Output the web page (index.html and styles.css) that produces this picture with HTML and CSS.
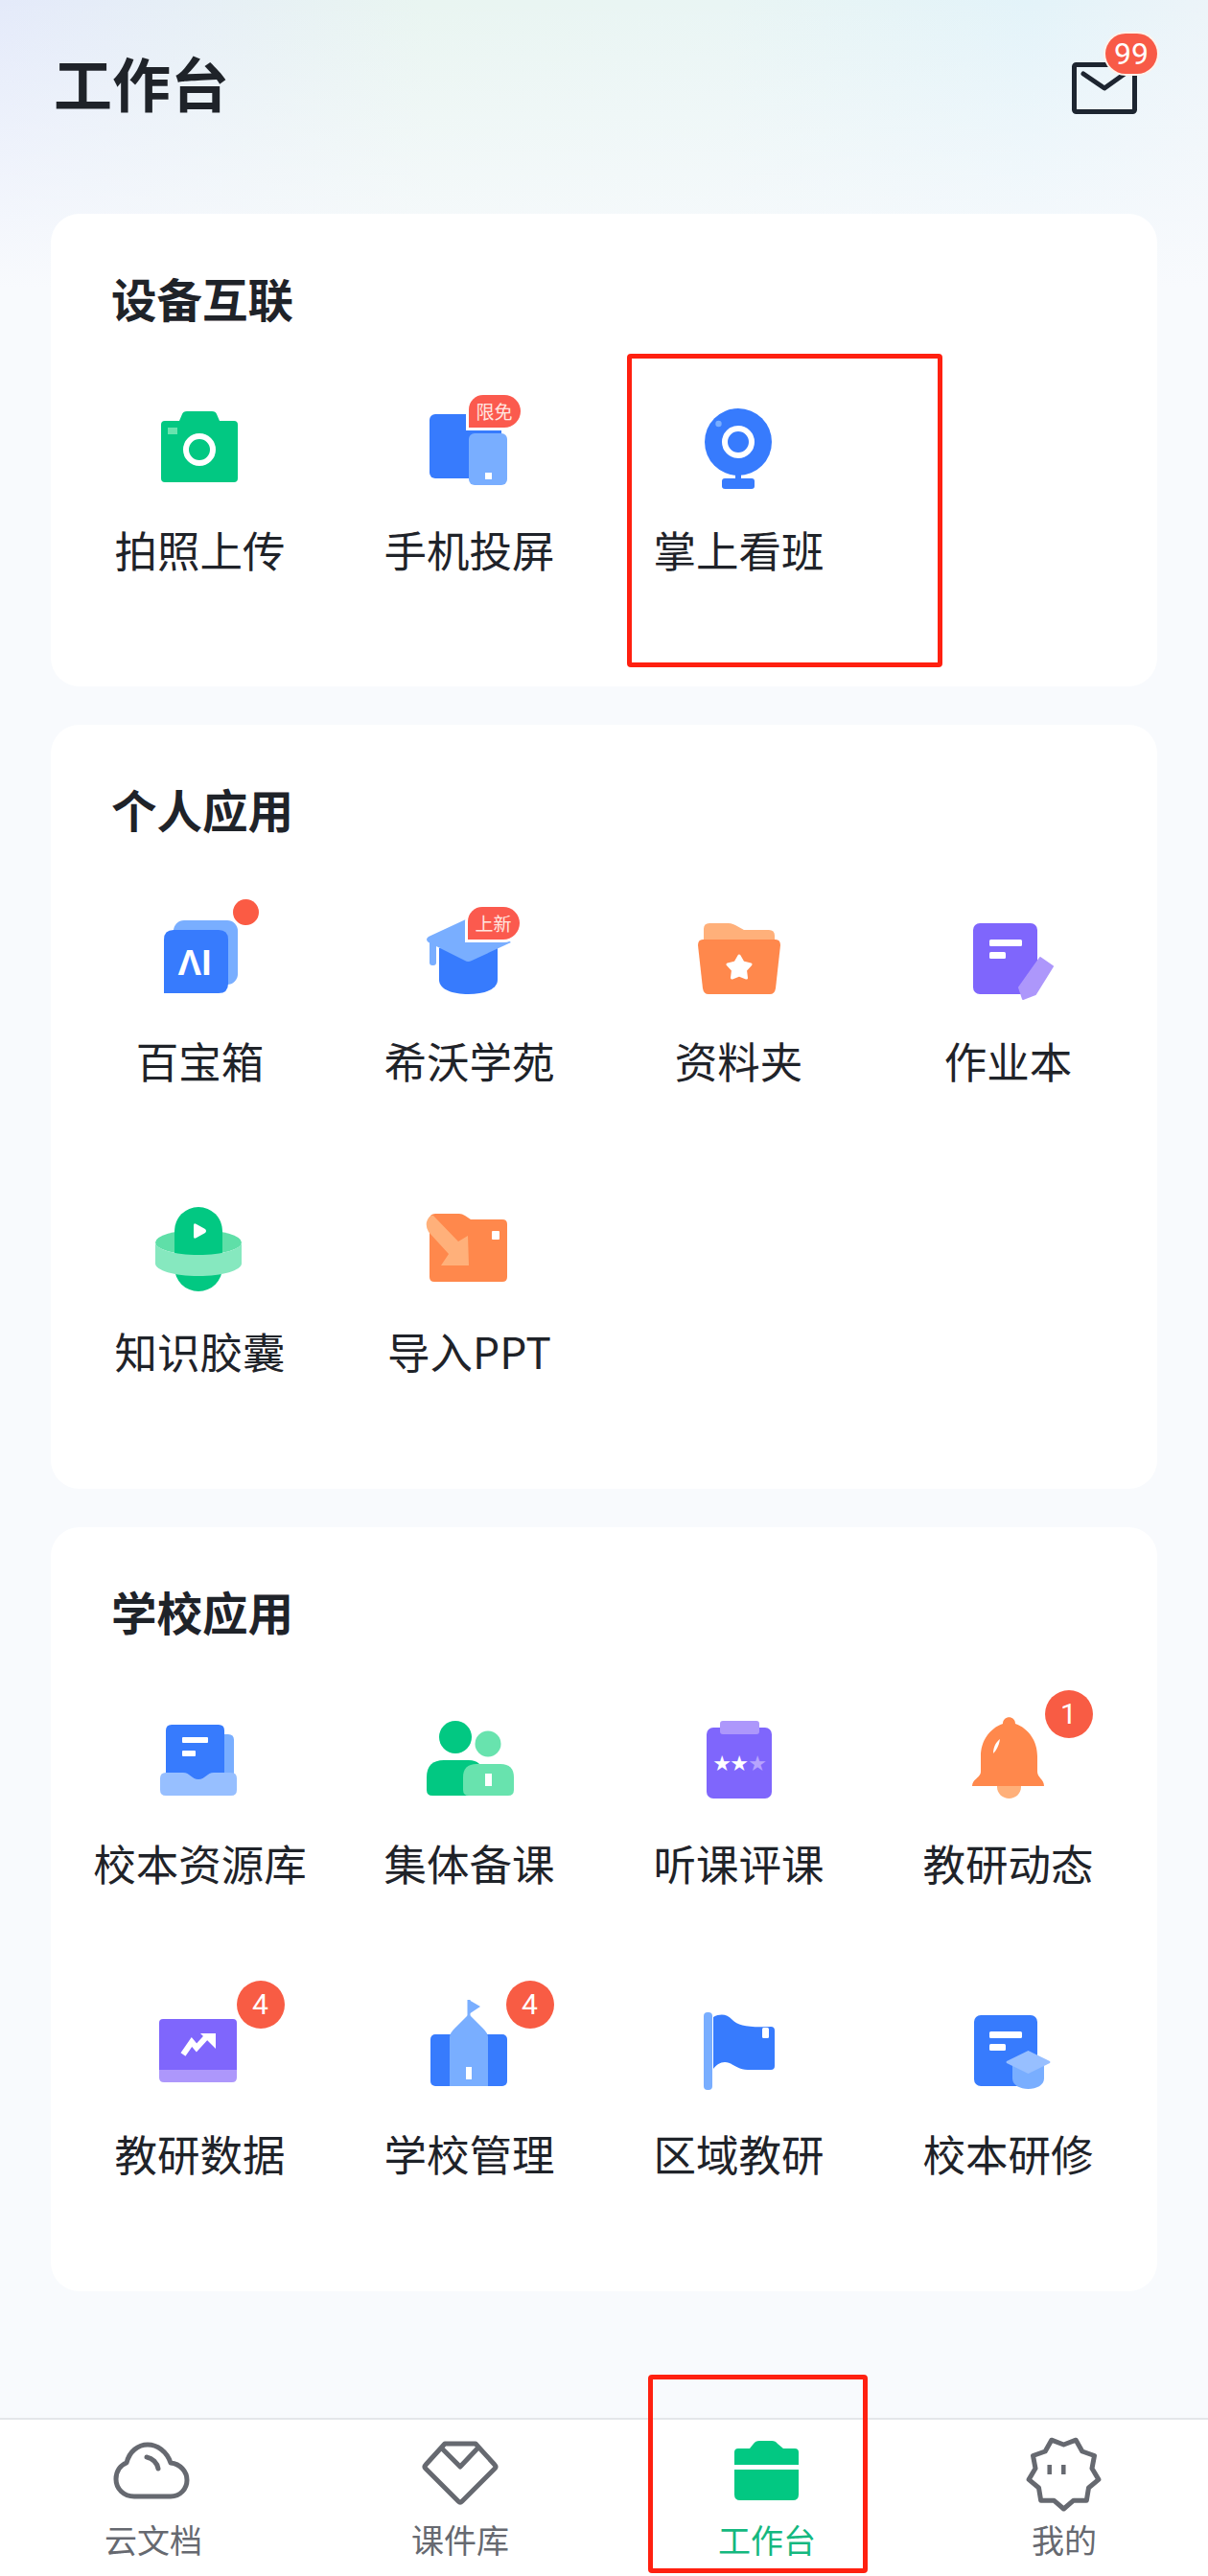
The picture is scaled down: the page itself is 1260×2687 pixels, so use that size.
FILE: index.html
```html
<!DOCTYPE html>
<html lang="zh-CN">
<head>
    <meta charset="UTF-8">
    <meta name="viewport" content="width=device-width, initial-scale=1.0">
    <title>工作台</title>
    <link rel="stylesheet" href="styles.css">
</head>
<body>
    <div class="page">
        <div class="main">
            <div class="header">
                <h1>工作台</h1>
                <div class="mail">
                    <svg width="68" height="54" viewBox="0 0 68 54">
                        <rect x="2.5" y="2.5" width="63" height="49" rx="2" fill="none" stroke="#1d2530" stroke-width="5"/>
                        <path d="M12 12 L34 27 L55 12" fill="none" stroke="#1d2530" stroke-width="5" stroke-linecap="round" stroke-linejoin="round"/>
                    </svg>
                    <span class="mail-count">99</span>
                </div>
            </div>

            <!-- 设备互联 -->
            <section class="card">
                <h2>设备互联</h2>
                <div class="apps">
                    <div class="item">
                        <div class="icon">
                            <svg class="ic" viewBox="0 0 100 100">
                                <path d="M14 23 H29 L32 16 Q33 13 37 13 H63 Q67 13 68 16 L71 23 H86 Q90 23 90 27 V83 Q90 87 86 87 H14 Q10 87 10 83 V27 Q10 23 14 23Z" fill="#02c882"/>
                                <rect x="17" y="30" width="10" height="7" fill="#68e3ae"/>
                                <circle cx="50" cy="53" r="14" fill="none" stroke="#fff" stroke-width="6"/>
                            </svg>
                        </div>
                        <div class="label">拍照上传</div>
                    </div>
                    <div class="item">
                        <div class="icon">
                            <svg class="ic" viewBox="0 0 100 100">
                                <rect x="9" y="16" width="75" height="67" rx="6" fill="#377bfd"/>
                                <rect x="50" y="36" width="40" height="54" rx="6" fill="#79aeff"/>
                                <rect x="67" y="77" width="7" height="7" fill="#fff"/>
                            </svg>
                            <span class="tag">限免</span>
                        </div>
                        <div class="label">手机投屏</div>
                    </div>
                    <div class="item">
                        <div class="icon">
                            <svg class="ic" viewBox="0 0 100 100">
                                <circle cx="50" cy="45" r="35" fill="#377bfd"/>
                                <rect x="47" y="76" width="6" height="10" fill="#377bfd"/>
                                <rect x="33" y="83" width="34" height="11" rx="3" fill="#377bfd"/>
                                <circle cx="50" cy="45" r="14" fill="none" stroke="#fff" stroke-width="6"/>
                                <circle cx="29.5" cy="26" r="3.2" fill="#79aeff"/>
                            </svg>
                        </div>
                        <div class="label">掌上看班</div>
                    </div>
                </div>
            </section>

            <!-- 个人应用 -->
            <section class="card">
                <h2>个人应用</h2>
                <div class="apps">
                    <div class="item">
                        <div class="icon">
                            <svg class="ic" viewBox="0 0 100 100">
                                <rect x="23" y="11" width="67" height="67" rx="11" fill="#79aeff"/>
                                <path d="M23 21 H70 Q80 21 80 31 V77 Q80 87 70 87 H13 V31 Q13 21 23 21Z" fill="#377bfd"/>
                                <text x="45" y="68" class="ai-text">ΛI</text>
                            </svg>
                            <span class="dot"></span>
                        </div>
                        <div class="label">百宝箱</div>
                    </div>
                    <div class="item">
                        <div class="icon">
                            <svg class="ic" viewBox="0 0 100 100">
                                <path d="M19 40 H80 V73 C80 83 66 88 49.5 88 C33 88 19 83 19 73Z" fill="#377bfd"/>
                                <rect x="9" y="32" width="7" height="26" rx="3" fill="#79aeff"/>
                                <path d="M49 9 L8 28 Q4 31 8 34 L46 53 Q49 55 53 53 L94 34 L60 9Z" fill="#79aeff"/>
                            </svg>
                            <span class="tag tag-new">上新</span>
                        </div>
                        <div class="label">希沃学苑</div>
                    </div>
                    <div class="item">
                        <div class="icon">
                            <svg class="ic" viewBox="0 0 100 100">
                                <path d="M14 40 V20 Q14 14 20 14 H40 Q44 14 47 16 L56 21 H82 Q88 21 88 27 V40Z" fill="#ffb07a"/>
                                <path d="M13 31 H89 Q94 31 94 37 L89 82 Q88 88 83 88 H19 Q14 88 13 82 L8 37 Q8 31 13 31Z" fill="#ff884c"/>
                                <path d="M51 48 L55 55 L63 57 L57.5 63 L58.5 71 L51 68 L43.5 71 L44.5 63 L39 57 L47 55Z" fill="#fff" stroke="#fff" stroke-width="3" stroke-linejoin="round"/>
                            </svg>
                        </div>
                        <div class="label">资料夹</div>
                    </div>
                    <div class="item">
                        <div class="icon">
                            <svg class="ic" viewBox="0 0 100 100">
                                <rect x="14" y="14" width="67" height="74" rx="7" fill="#7f66fc"/>
                                <rect x="31" y="31" width="34" height="7" rx="1.5" fill="#fff"/>
                                <rect x="31" y="44" width="17" height="7" rx="1.5" fill="#fff"/>
                                <path d="M84 50 L97 59 L79 88 L66 93 L62 81Z" fill="#ad97fb" stroke="#ad97fb" stroke-width="2" stroke-linejoin="round"/>
                            </svg>
                        </div>
                        <div class="label">作业本</div>
                    </div>
                    <div class="item">
                        <div class="icon">
                            <svg class="ic" viewBox="0 0 100 100">
                                <ellipse cx="49" cy="44" rx="45" ry="13" fill="#5fdfa8"/>
                                <rect x="24" y="7" width="50" height="88" rx="25" fill="#02c882"/>
                                <path d="M44 26 Q44 23 47 25 L56 30 Q58 32 56 34 L47 39 Q44 41 44 38Z" fill="#fff"/>
                                <path d="M4 44 C4 51 24 57 49 57 C74 57 94 51 94 44 V66 C94 73 74 79 49 79 C24 79 4 73 4 66Z" fill="#86e8bf"/>
                            </svg>
                        </div>
                        <div class="label">知识胶囊</div>
                    </div>
                    <div class="item">
                        <div class="icon">
                            <svg class="ic" viewBox="0 0 100 100">
                                <path d="M15 14 H40 Q43 14 46 16 L52 20 H85 Q90 20 90 25 V80 Q90 85 85 85 H14 Q9 85 9 80 V20 Q9 14 15 14Z" fill="#ff884c"/>
                                <path d="M13 16 L39 43 L49 37 L50 68 L21 68 L29 56 L8 33 Q4 26 7 20 Q10 15 13 16Z" fill="#ffb07a"/>
                                <rect x="74" y="32" width="8" height="9" rx="1" fill="#fff"/>
                            </svg>
                        </div>
                        <div class="label">导入PPT</div>
                    </div>
                </div>
            </section>

            <!-- 学校应用 -->
            <section class="card">
                <h2>学校应用</h2>
                <div class="apps">
                    <div class="item">
                        <div class="icon">
                            <svg class="ic" viewBox="0 0 100 100">
                                <path d="M70 23 H80 Q86 23 86 29 V70 H70Z" fill="#79aeff"/>
                                <path d="M21 13 H70 Q76 13 76 19 V72 H15 V19 Q15 13 21 13Z" fill="#377bfd"/>
                                <rect x="32" y="26" width="27" height="6" rx="1" fill="#fff"/>
                                <rect x="32" y="40" width="14" height="6" rx="1" fill="#fff"/>
                                <path d="M15 63 H33 C40 63 42 70 49 70 C56 70 58 63 65 63 H83 Q89 63 89 69 V81 Q89 87 83 87 H15 Q9 87 9 81 V69 Q9 63 15 63Z" fill="#97bfff"/>
                            </svg>
                        </div>
                        <div class="label">校本资源库</div>
                    </div>
                    <div class="item">
                        <div class="icon">
                            <svg class="ic" viewBox="0 0 100 100">
                                <circle cx="36" cy="26" r="17" fill="#02c882"/>
                                <circle cx="70" cy="33" r="13.5" fill="#68e3ae"/>
                                <path d="M24 50 H50 Q64 50 64 64 V87 H12 Q6 87 6 81 V68 Q6 50 24 50Z" fill="#02c882"/>
                                <path d="M58 54 H83 Q97 54 97 68 V81 Q97 87 91 87 H50 Q44 87 44 81 V68 Q44 54 58 54Z" fill="#68e3ae"/>
                                <rect x="67" y="64" width="7" height="13" fill="#fff"/>
                            </svg>
                        </div>
                        <div class="label">集体备课</div>
                    </div>
                    <div class="item">
                        <div class="icon">
                            <svg class="ic" viewBox="0 0 100 100">
                                <rect x="17" y="16" width="68" height="74" rx="7" fill="#7f66fc"/>
                                <rect x="31" y="9" width="41" height="14" rx="3" fill="#ad97fb"/>
                                <text x="33" y="61" class="star">★</text>
                                <text x="51" y="61" class="star">★</text>
                                <text x="70" y="61" class="star star-dim">★</text>
                            </svg>
                        </div>
                        <div class="label">听课评课</div>
                    </div>
                    <div class="item">
                        <div class="icon">
                            <svg class="ic" viewBox="0 0 100 100">
                                <path d="M39 76 H64 V78 C64 85 58 90 51.5 90 C45 90 39 85 39 78Z" fill="#ffb07a"/>
                                <path d="M45 12 C45 3 58 3 58 12 C72 17 81 30 81 46 V62 C81 68 88 70 88 77 H13 C13 70 22 68 22 62 V46 C22 30 31 17 45 12Z" fill="#ff884c"/>
                                <path d="M42 28 C38 31 35 36 35 43 C38 40 41 35 42 28Z" fill="#fff"/>
                            </svg>
                            <span class="count">1</span>
                        </div>
                        <div class="label">教研动态</div>
                    </div>
                    <div class="item">
                        <div class="icon">
                            <svg class="ic" viewBox="0 0 100 100">
                                <path d="M8 70 H89 V78 Q89 83 84 83 H13 Q8 83 8 78Z" fill="#ad97fb"/>
                                <path d="M12 17 H85 Q89 17 89 21 V70 H8 V21 Q8 17 12 17Z" fill="#7f66fc"/>
                                <path d="M33 54 L42 41 L47 47 L57 36" fill="none" stroke="#fff" stroke-width="6" stroke-linejoin="miter"/>
                                <path d="M51 32 H67 V48Z" fill="#fff"/>
                            </svg>
                            <span class="count">4</span>
                        </div>
                        <div class="label">教研数据</div>
                    </div>
                    <div class="item">
                        <div class="icon">
                            <svg class="ic" viewBox="0 0 100 100">
                                <rect x="10" y="33" width="80" height="54" rx="5" fill="#377bfd"/>
                                <path d="M50 12 L65 27 Q70 32 70 36 V87 H30 V36 Q30 32 35 27Z" fill="#79aeff"/>
                                <rect x="48.5" y="-3" width="3" height="18" fill="#79aeff"/>
                                <path d="M50 -3 L62 4 L50 12Z" fill="#79aeff"/>
                                <rect x="47" y="67" width="6" height="13" fill="#fff"/>
                            </svg>
                            <span class="count">4</span>
                        </div>
                        <div class="label">学校管理</div>
                    </div>
                    <div class="item">
                        <div class="icon">
                            <svg class="ic" viewBox="0 0 100 100">
                                <rect x="14" y="10" width="9" height="81" rx="4" fill="#79aeff"/>
                                <path d="M24 15 C32 11 38 12 44 18 C50 24 60 26 84 25 Q88 25 88 29 V66 Q88 70 84 70 H60 C48 70 44 62 36 62 C31 62 27 65 24 69Z" fill="#377bfd"/>
                                <rect x="75" y="26" width="7" height="11" rx="1.5" fill="#fff"/>
                            </svg>
                        </div>
                        <div class="label">区域教研</div>
                    </div>
                    <div class="item">
                        <div class="icon">
                            <svg class="ic" viewBox="0 0 100 100">
                                <rect x="15" y="13" width="66" height="74" rx="7" fill="#377bfd"/>
                                <rect x="31" y="30" width="34" height="7" rx="1.5" fill="#fff"/>
                                <rect x="31" y="43" width="17" height="7" rx="1.5" fill="#fff"/>
                                <path d="M55 60 H88 V79 C88 86 80 90 71.5 90 C63 90 55 86 55 79Z" fill="#79aeff"/>
                                <path d="M71.5 50 L94 61 Q95 62 94 63 L71.5 74 L49 63 Q48 62 49 61Z" fill="#97bfff"/>
                            </svg>
                        </div>
                        <div class="label">校本研修</div>
                    </div>
                </div>
            </section>
        </div>

        <div class="tabbar">
            <div class="tab">
                <svg width="84" height="84" viewBox="0 0 84 84" fill="none" stroke="#666970" stroke-width="5" stroke-linecap="round" stroke-linejoin="round">
                    <path d="M22 68 H60 C70 68 77 60 77 51 C77 42 70 34 60 33 C56 21 46 14 36 14 C26 14 17 21 14 33 C8 35 3 41 3 50 C3 60 11 68 22 68Z"/>
                    <path d="M35 27 C41 28 46 33 47 39"/>
                </svg>
                <span>云文档</span>
            </div>
            <div class="tab">
                <svg width="84" height="84" viewBox="0 0 84 84" fill="none" stroke="#666970" stroke-width="5" stroke-linecap="round" stroke-linejoin="round">
                    <path d="M26 13 H58 L78 35 Q80 37 78 39 L44 73 Q42 75 40 73 L6 39 Q4 37 6 35Z"/>
                    <path d="M24 19 L42 37 L59 19"/>
                </svg>
                <span>课件库</span>
            </div>
            <div class="tab tab-on">
                <svg width="84" height="84" viewBox="0 0 84 84">
                    <path d="M24 18 L28 13 Q30 10 34 10 H47 Q51 10 53 13 L59 18 H71 Q75 18 75 22 V35 H8 V22 Q8 18 12 18Z" fill="#02c882"/>
                    <path d="M8 40 H75 V66 Q75 72 69 72 H14 Q8 72 8 66Z" fill="#02c882"/>
                </svg>
                <span>工作台</span>
            </div>
            <div class="tab">
                <svg width="84" height="84" viewBox="0 0 84 84" fill="none" stroke="#666970" stroke-width="5" stroke-linejoin="round">
                    <path d="M41.5 81 L51.8 72.2 L65.3 72.3 L67.5 59 L77.9 50.4 L71 38.8 L73.5 25.5 L60.8 21 L54.2 9.2 L41.5 14 L28.8 9.2 L22.2 21 L9.5 25.5 L12 38.8 L5.1 50.4 L15.5 59 L17.7 72.3 L31.2 72.2Z"/>
                    <path d="M26.7 35 V45 M41.3 35 V45" stroke-width="4.5"/>
                </svg>
                <span>我的</span>
            </div>
        </div>

        <!-- 红色标注框 -->
        <div class="mark mark-app"></div>
        <div class="mark mark-tab"></div>
    </div>
</body>
</html>
```

FILE: styles.css
```css
* {
    box-sizing: border-box;
}
body {
    margin: 0;
    font-family: "Noto Sans CJK SC", "Noto Sans", sans-serif;
    color: #1f2329;
}
.page {
    position: relative;
    display: flex;
    flex-direction: column;
    width: 1260px;
    height: 2687px;
    overflow: hidden;
    background-color: #f9fafd;
}
.main {
    flex: 1;
    padding: 0 53px;
    background:
        linear-gradient(to bottom, rgba(249, 250, 253, 0) 0, #f8fafd 300px),
        linear-gradient(90deg, #e4eafa 0, #e9f5f1 35%, #e9f5f4 60%, #e3f3f9 85%, #ecf4f9 100%);
}
.header {
    display: flex;
    justify-content: space-between;
    align-items: flex-start;
    height: 223px;
    padding: 49px 21px 0 3px;
}
h1 {
    margin: 0;
    font-size: 61px;
    line-height: 74px;
    font-weight: 700;
}
.mail {
    position: relative;
    width: 68px;
    height: 54px;
    margin-top: 16px;
}
.mail svg {
    display: block;
}
.mail-count {
    position: absolute;
    left: 35px;
    top: -30px;
    width: 54px;
    height: 42px;
    border-radius: 21px;
    background-color: #f85a47;
    box-shadow: 0 0 0 2px #fdf3ec;
    color: #fff;
    font-family: Roboto, sans-serif;
    font-size: 32px;
    line-height: 42px;
    text-align: center;
}
.card {
    height: 493px;
    margin-bottom: 40px;
    border-radius: 30px;
    background-color: #fff;
    padding-top: 61px;
}
.card:nth-of-type(2),
.card:nth-of-type(3) {
    height: 797px;
}
h2 {
    margin: 0 0 75px 63px;
    font-size: 47.5px;
    line-height: 54px;
    font-weight: 700;
}
.apps {
    display: grid;
    grid-template-columns: repeat(4, 281px);
    padding: 0 14px;
}
.item {
    display: flex;
    flex-direction: column;
    align-items: center;
    height: 303px;
    padding-top: 3px;
}
.icon {
    position: relative;
    width: 100px;
    height: 100px;
}
.ic {
    display: block;
    width: 100px;
    height: 100px;
    overflow: visible;
}
.label {
    margin: 27px 0 0 2px;
    font-size: 44.5px;
    line-height: 60px;
    white-space: nowrap;
}
.ai-text {
    font-family: "Liberation Sans", sans-serif;
    font-size: 37px;
    font-weight: 700;
    fill: #fff;
    text-anchor: middle;
}
.star {
    font-family: "DejaVu Sans", sans-serif;
    font-size: 22px;
    fill: #fff;
    text-anchor: middle;
}
.star-dim {
    fill: #b7a4fd;
}
.tag {
    position: absolute;
    left: 50px;
    top: -4px;
    width: 54px;
    height: 34px;
    border-radius: 15px 17px 17px 0;
    background-color: #fb5a4e;
    box-shadow: 0 0 0 3px #fff;
    color: #ffe6e0;
    font-size: 19px;
    line-height: 34px;
    text-align: center;
}
.tag-new {
    left: 49px;
    top: -3px;
}
.dot {
    position: absolute;
    left: 85px;
    top: -11px;
    width: 27px;
    height: 27px;
    border-radius: 50%;
    background-color: #fb5b44;
}
.count {
    position: absolute;
    left: 89px;
    top: -23px;
    width: 50px;
    height: 50px;
    border-radius: 50%;
    background-color: #f85c44;
    color: #fff;
    font-family: Roboto, sans-serif;
    font-size: 30px;
    line-height: 50px;
    text-align: center;
}
.tabbar {
    display: grid;
    grid-template-columns: 320px 320px 320px 300px;
    height: 165px;
    padding-top: 12px;
    border-top: 2px solid #e4e6ea;
    background-color: #fff;
}
.tab {
    display: flex;
    flex-direction: column;
    align-items: center;
    font-size: 34px;
    line-height: 40px;
    color: #666970;
}
.tab svg {
    display: block;
    margin-bottom: 9px;
}
.tab-on {
    color: #14b87f;
}
.mark {
    position: absolute;
    border-style: solid;
    border-color: #ff2010;
    border-radius: 4px;
    border-width: 5px;
}
.mark-app {
    left: 654px;
    top: 369px;
    width: 329px;
    height: 327px;
}
.mark-tab {
    left: 676px;
    top: 2477px;
    width: 229px;
    height: 207px;
}
```
